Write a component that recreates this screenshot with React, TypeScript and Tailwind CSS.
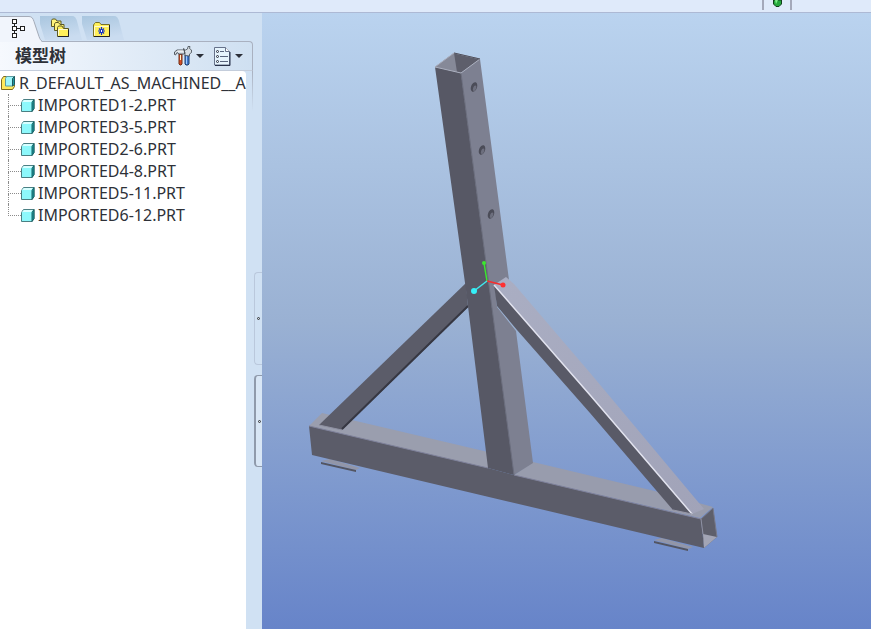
import { useState } from 'react';

const parts = [
  'IMPORTED1-2.PRT',
  'IMPORTED3-5.PRT',
  'IMPORTED2-6.PRT',
  'IMPORTED4-8.PRT',
  'IMPORTED5-11.PRT',
  'IMPORTED6-12.PRT',
];

const holes = [
  { x: 474, y: 87 },
  { x: 482, y: 150 },
  { x: 491, y: 214 },
];

const TreeIcon = () => (
  <svg width="14" height="20" viewBox="0 0 14 20" fill="#fff" stroke="#222" shapeRendering="crispEdges">
    <path d="M2.5 5v11M5 9.5h4" fill="none" />
    <rect x="0.5" y="0.5" width="4" height="4" />
    <rect x="0.5" y="7.5" width="4" height="4" />
    <rect x="0.5" y="14.5" width="4" height="4" />
    <rect x="8.5" y="7.5" width="4" height="4" />
  </svg>
);

const FoldersIcon = () => (
  <svg width="19" height="20" viewBox="0 0 19 20" fill="#fdf37a" stroke="#5d5a25">
    <path d="M.5 8.500V2.500l1-1.500h3l1.500 2h4v5.500z" />
    <path d="M3.500 12.500V6l1-1.500h3l1.500 2h4v6z" />
    <path d="M6.500 18.500V9.500l1-1.500h3.500l1.500 2.500h5v8z" fill="#fff05a" />
    <path d="M7.500 17.500v-6h9" stroke="#fffbd0" fill="none" />
    <path d="M7 18.500h10.500v-7" stroke="#222" fill="none" />
  </svg>
);

const FavoritesIcon = () => (
  <svg width="18" height="16" viewBox="0 0 18 16">
    <path d="M.5 14.500V3l1-1.500 1-1h4l1.500 2h8.500v12z" fill="#fff05a" stroke="#77702a" />
    <path d="M1.500 13.500V4.500h14" stroke="#fffbd0" fill="none" />
    <path d="M1 14.500h15.500V3" stroke="#222" fill="none" />
    <path d="M8.500 5v8M5 9h7M6 6.500l5 5M11 6.500l-5 5" stroke="#1230c8" strokeWidth="1.2" />
    <rect x="8" y="8" width="1" height="2" fill="#fff" />
  </svg>
);

const ToolsIcon = () => (
  <svg width="18" height="20" viewBox="0 0 18 20">
    <path d="M11 9h4v9l-1 1h-2l-1-1z" fill="#3c78d0" stroke="#25406e" />
    <path d="M12.500 10v8" stroke="#9cc8ff" />
    <path d="M11 9.500V6.500L9.500 5V2.500l2 1.500 2-1 .5-2.500 2 0-.5 2 2 1.500v2.500l-2 1.500v2z" fill="#d6dde3" stroke="#444b52" strokeWidth="0.8" />
    <path d="M5 8h3v10l-1 1H6l-1-1z" fill="#d74c26" stroke="#713016" />
    <path d="M6.500 9v5" stroke="#fff3c8" />
    <path d="M.5 8.500V6L3 4h7.500v4H5L3 6.500 1.500 9z" fill="#d6dde3" stroke="#444b52" strokeWidth="0.9" />
    <path d="M3.500 5H9" stroke="#fff" />
  </svg>
);

const SettingsIcon = () => (
  <svg width="17" height="19" viewBox="0 0 17 19">
    <path d="M.5.500h11l4 4v13.500H.5z" fill="#e6f4fd" stroke="#66728a" />
    <path d="M1 18.500h15V5" stroke="#28324a" fill="none" />
    <path d="M11.500.500v4h4" fill="#fff" stroke="#66728a" />
    <g fill="#fff" stroke="#222a3a">
      <circle cx="3.500" cy="4.500" r="1" />
      <circle cx="3.500" cy="9.500" r="1" />
      <circle cx="3.500" cy="14.500" r="1" />
      <path d="M6 4.500h4M6 9.500h8M6 14.500h8" stroke="#59657d" />
    </g>
  </svg>
);

const AssemblyIcon = () => (
  <svg width="16" height="16" viewBox="0 0 16 16">
    <path d="M1.500 4.500l2-3h11v10l-2 3h-11z" fill="#ffe95c" stroke="#7d6b1e" />
    <path d="M5.500 3.500l1-2h8v8l-2 1.500h-7z" fill="#9ff6fa" stroke="#5c9ba0" />
    <path d="M12.500 3.500l2-2v8l-2 1.500z" fill="#1f9aa0" stroke="#205a60" />
  </svg>
);

const PartIcon = () => (
  <svg width="14" height="13" viewBox="0 0 14 13">
    <path d="M.5 3.500l2-3h10.500v9l-2 3H.5z" fill="#8df8fb" stroke="#4b7f83" />
    <path d="M1 3l2-2h9l-2 2z" fill="#d8ffff" />
    <path d="M11 3.500l2-3v9l-2 3z" fill="#14959a" stroke="#1b6165" />
  </svg>
);

const Caret = () => (
  <svg width="8" height="4" viewBox="0 0 8 4">
    <path d="M0 0h8L4 4z" fill="#2b2f38" />
  </svg>
);

const InactiveTab = () => (
  <svg className="absolute inset-0" width="42" height="24" viewBox="0 0 42 24">
    <defs>
      <linearGradient id="tabFade" x1="0" y1="0" x2="0.3" y2="1">
        <stop offset="0" stopColor="#a9c6df" />
        <stop offset="1" stopColor="#cadcf0" />
      </linearGradient>
    </defs>
    <path d="M0 0h32c3 0 4 2 5 5l5 19H5L0 8z" fill="url(#tabFade)" />
  </svg>
);

const FrameModel = () => (
  <svg className="block h-[616px] w-[609px] shrink-0" viewBox="262 13 609 616" role="img" aria-label="R_DEFAULT_AS_MACHINED__A">
    <defs>
      <linearGradient id="brace" x1="0" y1="0" x2="1" y2="1">
        <stop offset="0" stopColor="#aaaec3" />
        <stop offset="1" stopColor="#a1a3b8" />
      </linearGradient>
    </defs>

    {/* feet */}
    <path d="M321 461l9-2 30 9-4 2z" fill="#9296a8" />
    <path d="M321 462l35 8v2l-35-8z" fill="#535562" />
    <path d="M654 540l8-2 31 9-5 2z" fill="#9296a8" />
    <path d="M654 541l34 8v2l-34-8z" fill="#535562" />

    {/* base bar */}
    <path d="M309 426l13-13 166 39v16z" fill="#9a9eae" />
    <path d="M514 475l19-13 130 31 50 14-13 11z" fill="#989cad" />
    <path d="M309 426l179 42 26 7 187 44 3 29-164-39-228-54z" fill="#5b5c69" />
    <path d="M309 426l179 42M514 475l187 44" stroke="#80829a" fill="none" />
    <path d="M701 519l12-11 4 29-13 11z" fill="#5e5f6b" />
    <path d="M703 534l14 3-13 11z" fill="#a3a5b5" />
    <path d="M701 519l12-11 4 29" fill="none" stroke="#777989" />
    <path d="M701 519l2 15" stroke="#8f91a2" />

    {/* left brace */}
    <path d="M466 283l2 24-126 123-23-5z" fill="#5b5c69" />
    <path d="M468 306L342 429" stroke="#363742" strokeWidth="2" />
    <path d="M319 425l23 5" stroke="#8f91a2" />

    {/* upright */}
    <path d="M461 73l19-14 29 221-14 5 2 22 19 24 17 132-19 12z" fill="#7d8091" />
    <path d="M435 67l26 6 53 402-26-7-22-178z" fill="#575865" />
    <path d="M461 73l53 402" stroke="#6b6d7c" />
    <path d="M435 67l19-14 26 6-19 14z" fill="#5d5e6b" />
    <path d="M435 67l19-14 3 19z" fill="#868998" />
    <path d="M435 67l19-14 26 6-19 14z" fill="none" stroke="#aaaebd" />
    <path d="M454 53l26 6" stroke="#4e505d" />
    {holes.map((h) => (
      <g key={h.y} transform={`rotate(20 ${h.x} ${h.y})`}>
        <ellipse cx={h.x} cy={h.y} rx="3" ry="5" fill="#4b4c58" />
        <ellipse cx={h.x + 1} cy={h.y + 1} rx="1.500" ry="3" fill="#6d6f7e" />
      </g>
    ))}

    {/* right brace */}
    <path d="M494 285l96 110 102 119-19-4-83-97-73-83-20-24z" fill="#595a67" />
    <path d="M494 285l12-8 8 7 77 90 113 135-12 5-102-119z" fill="url(#brace)" />
    <path d="M494 285l96 110 102 119" stroke="#e2e3ef" strokeWidth="1.500" fill="none" />
    <path d="M673 510l19 4" stroke="#9698a9" />

    {/* orientation axes */}
    <g strokeWidth="1.500">
      <path d="M487 281l-3-18" stroke="#3be62f" />
      <path d="M487 281l16 4" stroke="#f82c2c" />
      <path d="M487 281l-13 10" stroke="#3fe8ee" />
    </g>
    <circle cx="484" cy="263" r="2" fill="#3be62f" />
    <circle cx="503" cy="285" r="2.500" fill="#ff3030" />
    <circle cx="474" cy="291" r="3" fill="#35f0f8" />
  </svg>
);

const App = () => {
  const [activeTab, setActiveTab] = useState('tree');

  return (
    <div className="flex h-screen flex-col overflow-hidden bg-[#cddff2] font-['Noto_Sans','Noto_Sans_CJK_SC',sans-serif] text-[#2e3138]">
      {/* Bottom edge of the main toolbar */}
      <header className="flex h-[13px] shrink-0 justify-end border-b border-[#adb9d4] bg-[#dfeafa] pr-[79px]">
        <button aria-label="Regenerate" className="flex h-[10px] w-[30px] items-start justify-center border-x-2 border-x-[#a4a9ba]">
          <svg width="9" height="7" viewBox="0 0 9 7">
            <path d="M.5 0h8v4L6 6.500H3L.5 4z" fill="#24a83c" stroke="#123f1c" />
            <path d="M2 0h3L3 4z" fill="#7df08a" />
          </svg>
        </button>
      </header>

      <main className="flex min-h-0 flex-1">
        <aside className="flex w-[262px] shrink-0 flex-col bg-[#d0e1f3]">
          <div role="tablist" className="flex h-7 shrink-0 pt-[3px]">
            <button
              role="tab"
              aria-label="Model tree"
              aria-selected={activeTab === 'tree'}
              onClick={() => setActiveTab('tree')}
              className="relative z-10 h-[25px] w-10"
            >
              <svg className="absolute inset-0" width="42" height="26" viewBox="0 0 42 26">
                <path d="M0 .5h29c3 0 4 2 5 5l5 15c1 3 2 4.500 3 5.500H0z" fill="#f1f5fc" />
                <path d="M0 .5h29c3 0 4 2 5 5l5 15c1 3 2 4 3 4.500" fill="none" stroke="#a4abb8" />
              </svg>
              <span className="absolute top-[3px] left-3"><TreeIcon /></span>
            </button>
            <button
              role="tab"
              aria-label="Folders"
              aria-selected={activeTab === 'folders'}
              onClick={() => setActiveTab('folders')}
              className="relative h-6 w-[42px]"
            >
              <InactiveTab />
              <span className="absolute top-0.5 left-[11px]"><FoldersIcon /></span>
            </button>
            <button
              role="tab"
              aria-label="Favorites"
              aria-selected={activeTab === 'favorites'}
              onClick={() => setActiveTab('favorites')}
              className="relative h-6 w-[42px]"
            >
              <InactiveTab />
              <span className="absolute top-1.5 left-[11px]"><FavoritesIcon /></span>
            </button>
          </div>

          <div className="mr-[9px] flex h-[30px] shrink-0 items-center rounded-tr border-t border-r border-b border-[#a9b1c0] border-b-[#c4cddb] bg-linear-to-r from-[#f6f9fe] to-[#cfe0f1] pr-[9px] pl-[15px]">
            <h1 className="flex-1 pb-0.5 font-['Noto_Sans_CJK_SC',sans-serif] text-[17px] leading-6 font-bold">模型树</h1>
            <div className="flex items-center gap-2.5">
              <button aria-label="Tools" className="flex items-center gap-1"><ToolsIcon /><Caret /></button>
              <button aria-label="Settings" className="flex items-center gap-1"><SettingsIcon /><Caret /></button>
            </div>
          </div>

          <div className="flex min-h-0 flex-1">
            <div className="min-w-0 flex-1 rounded-tr bg-white pt-px text-base leading-[22px]">
              <div className="flex h-[22px] items-center gap-[3px] whitespace-nowrap">
                <AssemblyIcon />
                <span>R_DEFAULT_AS_MACHINED__A</span>
              </div>
              <ul>
                {parts.map((part, i) => (
                  <li key={part} className="flex h-[22px] items-center pl-2">
                    <span className="flex h-full w-[13px] flex-col">
                      <span className="h-3 border-b border-l border-dotted border-[#8b8b8b]" />
                      {i < parts.length - 1 && <span className="flex-1 border-l border-dotted border-[#8b8b8b]" />}
                    </span>
                    <PartIcon />
                    <span className="pl-[3px] whitespace-nowrap">{part}</span>
                  </li>
                ))}
              </ul>
            </div>

            {/* Splitter handles */}
            <div className="flex w-4 shrink-0">
              <div className="h-10 w-[7px] bg-linear-to-b from-[#a9b1c0] to-[#d0e1f3] pr-px">
                <div className="h-full bg-[#d0e1f3]" />
              </div>
              <div className="flex flex-1 flex-col items-end gap-2.5 pt-[201px]">
                <button aria-label="Collapse panel" className="flex h-[93px] w-2 items-center justify-center rounded-l-sm border-y border-l border-[#bac8dc]">
                  <span className="size-[3px] rounded-full border border-[#333]" />
                </button>
                <button aria-label="Resize panel" className="flex h-[92px] w-2 items-center justify-center rounded-l border-y border-l-2 border-[#8f9aab] bg-[#d8e6f5]">
                  <span className="size-[3px] rounded-full border border-[#333]" />
                </button>
              </div>
            </div>
          </div>
        </aside>

        <section aria-label="Graphics" className="flex min-w-0 flex-1 overflow-hidden bg-linear-to-b from-[#bad3ef] via-[#9ab1d3] to-[#6784c9]">
          <FrameModel />
        </section>
      </main>
    </div>
  );
};

export default App;
